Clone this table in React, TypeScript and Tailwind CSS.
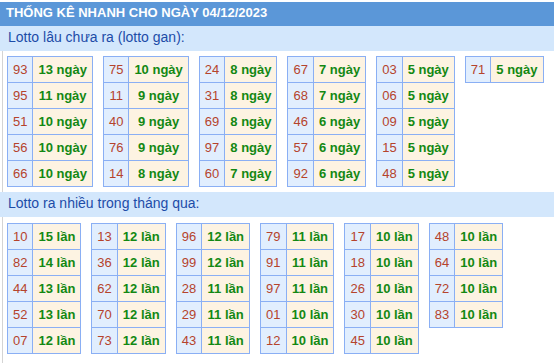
import React from "react";

type Row = [string, string];

const gan: Row[][] = [
  [["93", "13"], ["95", "11"], ["51", "10"], ["56", "10"], ["66", "10"]],
  [["75", "10"], ["11", "9"], ["40", "9"], ["76", "9"], ["14", "8"]],
  [["24", "8"], ["31", "8"], ["69", "8"], ["97", "8"], ["60", "7"]],
  [["67", "7"], ["68", "7"], ["46", "6"], ["57", "6"], ["92", "6"]],
  [["03", "5"], ["06", "5"], ["09", "5"], ["15", "5"], ["48", "5"]],
  [["71", "5"]],
];

const nhieu: Row[][] = [
  [["10", "15"], ["82", "14"], ["44", "13"], ["52", "13"], ["07", "12"]],
  [["13", "12"], ["36", "12"], ["62", "12"], ["70", "12"], ["73", "12"]],
  [["96", "12"], ["99", "12"], ["28", "11"], ["29", "11"], ["43", "11"]],
  [["79", "11"], ["91", "11"], ["97", "11"], ["01", "10"], ["12", "10"]],
  [["17", "10"], ["18", "10"], ["26", "10"], ["30", "10"], ["45", "10"]],
  [["48", "10"], ["64", "10"], ["72", "10"], ["83", "10"]],
];

function LottoTable({ rows, unit }: { rows: Row[]; unit: string }) {
  return (
    <table className="border-collapse border border-[#8aaff4] text-[13px]">
      <tbody>
        {rows.map(([n, v], i) => (
          <tr key={i} className="h-[26px]">
            <td className="border border-[#8aaff4] bg-[#e1eefe] px-[5px] p-0 text-center leading-[25px] text-[#b5432c]">
              {n}
            </td>
            <td className="border border-[#8aaff4] bg-[#fdf3e2] px-[5px] p-0 text-center leading-[25px] font-bold text-[#138813] whitespace-nowrap">
              {v} {unit}
            </td>
          </tr>
        ))}
      </tbody>
    </table>
  );
}

export default function App() {
  return (
    <div
      className="w-full bg-white"
      style={{ fontFamily: '"Liberation Sans", Arial, sans-serif' }}
    >
      <div className="mt-[2px] h-[24px] bg-[#5b97d8] pl-[6px] text-[13px] font-bold leading-[22px] text-white whitespace-nowrap">
        THỐNG KÊ NHANH CHO NGÀY 04/12/2023
      </div>
      <div className="h-[25px] bg-[#d3e7fc] pl-[8px] text-[14px] leading-[23px] text-[#1d4ca8]">
        Lotto lâu chưa ra (lotto gan):
      </div>
      <div className="ml-[2px] border-l border-[#d4d4d4] pl-[4px] pt-[5px] pb-[5px]">
        <div className="flex items-start gap-[10px]">
          {gan.map((t, i) => (
            <LottoTable key={i} rows={t} unit="ngày" />
          ))}
        </div>
      </div>
      <div className="h-[25px] bg-[#d3e7fc] pl-[8px] text-[14px] leading-[23px] text-[#1d4ca8]">
        Lotto ra nhiều trong tháng qua:
      </div>
      <div className="ml-[2px] border-l border-[#d4d4d4] pl-[4px] pt-[6px] pb-[12px]">
        <div className="flex items-start gap-[10px]">
          {nhieu.map((t, i) => (
            <LottoTable key={i} rows={t} unit="lần" />
          ))}
        </div>
      </div>
    </div>
  );
}
